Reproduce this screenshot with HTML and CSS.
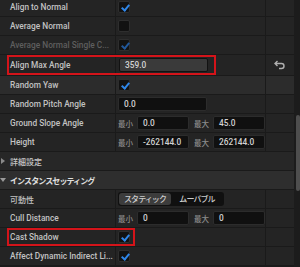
FILE: index.html
```html
<!DOCTYPE html>
<html lang="ja">
<head>
  <meta charset="UTF-8">
  <meta name="viewport" content="width=device-width, initial-scale=1.0">
  <title>Details</title>
  <link rel="stylesheet" href="styles.css">
</head>
<body>
  <div class="panel">
    <div class="rows">
      <div class="row">
        <div class="name">Align to Normal</div>
        <div class="value"><span class="check on"></span></div>
        <div class="reset"></div>
      </div>
      <div class="row">
        <div class="name">Average Normal</div>
        <div class="value"><span class="check"></span></div>
        <div class="reset"></div>
      </div>
      <div class="row">
        <div class="name dim">Average Normal Single C...</div>
        <div class="value"><span class="check on dim"></span></div>
        <div class="reset"></div>
      </div>
      <div class="row tall">
        <div class="name">Align Max Angle</div>
        <div class="value"><span class="field wide light">359.0</span></div>
        <div class="reset">
          <svg width="12" height="10" viewBox="0 0 12 10">
            <path d="M3.5 1 L1 3.5 L3.5 6 M1.5 3.5 H7.5 a2.5 2.5 0 0 1 0 5 H5" fill="none" stroke="#b0b0b0" stroke-width="1.4"/>
          </svg>
        </div>
        <div class="mark mark-angle"></div>
      </div>
      <div class="row hover">
        <div class="name">Random Yaw</div>
        <div class="value"><span class="check on"></span></div>
        <div class="reset"></div>
      </div>
      <div class="row">
        <div class="name">Random Pitch Angle</div>
        <div class="value"><span class="field wide">0.0</span></div>
        <div class="reset"></div>
      </div>
      <div class="row">
        <div class="name">Ground Slope Angle</div>
        <div class="value pair">
          <span class="tag">最小</span><span class="field">0.0</span>
          <span class="tag">最大</span><span class="field">45.0</span>
        </div>
        <div class="reset"></div>
      </div>
      <div class="row">
        <div class="name">Height</div>
        <div class="value pair">
          <span class="tag">最小</span><span class="field">-262144.0</span>
          <span class="tag">最大</span><span class="field">262144.0</span>
        </div>
        <div class="reset"></div>
      </div>
      <div class="category">
        <span class="arrow closed"></span><span class="jp">詳細設定</span>
      </div>
      <div class="category bold">
        <span class="arrow open"></span><span class="jp tight">インスタンスセッティング</span>
      </div>
      <div class="row">
        <div class="name jp">可動性</div>
        <div class="value">
          <div class="toggle">
            <span class="opt active">スタティック</span>
            <span class="opt">ムーバブル</span>
          </div>
        </div>
        <div class="reset"></div>
      </div>
      <div class="row">
        <div class="name">Cull Distance</div>
        <div class="value pair">
          <span class="tag">最小</span><span class="field">0</span>
          <span class="tag">最大</span><span class="field">0</span>
        </div>
        <div class="reset"></div>
      </div>
      <div class="row">
        <div class="name">Cast Shadow</div>
        <div class="value"><span class="check on"></span></div>
        <div class="reset"></div>
        <div class="mark mark-shadow"></div>
      </div>
      <div class="row">
        <div class="name">Affect Dynamic Indirect Li...</div>
        <div class="value"><span class="check on"></span></div>
        <div class="reset"></div>
      </div>
    </div>
    <div class="scrollbar"><div class="thumb"></div></div>
  </div>
</body>
</html>
```

FILE: styles.css
```css
/* Panel base */
body {
  margin: 0;
  background: #1a1a1a;
  font-family: Roboto, "Noto Sans CJK JP", sans-serif;
  font-size: 8.3px;
  font-weight: 500;
  color: #c2c2c2;
  overflow: hidden;
}

.panel {
  display: flex;
  width: 300px;
  height: 267px;
  overflow: hidden;
}

.rows {
  width: 294px;
  margin-top: -2px;
  display: flex;
  flex-direction: column;
}

.jp {
  font-family: "Noto Sans CJK JP", sans-serif;
  font-size: 8px;
}

.jp.tight {
  letter-spacing: -0.9px;
}

/* Property rows */
.row {
  position: relative;
  display: grid;
  grid-template-columns: 116px 150px 28px;
  height: 18px;
  flex: none;
  background: #242424;
  border-bottom: 1px solid #1a1a1a;
}

.row.tall {
  height: 20px;
}

.row.hover {
  background: #2c2c2c;
}

.name {
  padding-left: 10px;
  display: flex;
  align-items: center;
  white-space: nowrap;
  overflow: hidden;
  border-right: 1px solid #1a1a1a;
}

.name.dim {
  color: #5e5e5e;
}

.value {
  display: flex;
  align-items: center;
  padding-left: 2px;
  border-right: 1px solid #1a1a1a;
}

.reset {
  display: flex;
  align-items: center;
  justify-content: center;
}

/* Checkbox */
.check {
  position: relative;
  width: 10px;
  height: 10px;
  background: #121212;
  border: 1px solid #2e2e2e;
  border-radius: 2px;
}

.check.on::after {
  content: "";
  position: absolute;
  left: 3.5px;
  top: 0.5px;
  width: 3px;
  height: 6px;
  border: solid #2f86e8;
  border-width: 0 2px 2px 0;
  transform: rotate(40deg);
}

.check.dim.on::after {
  border-color: #22589a;
}

/* Number fields */
.field {
  flex: none;
  height: 12px;
  line-height: 12px;
  background: #101010;
  border: 1px solid #2c2c2c;
  border-radius: 2px;
  padding-left: 5px;
  color: #d2d2d2;
  width: 45px;
  white-space: nowrap;
}

.field.wide {
  width: 82px;
}

.field.light {
  background: #3a3a3a;
  border-color: #121212;
  margin-left: 1px;
}

.pair .tag {
  flex: none;
  font-family: "Noto Sans CJK JP", sans-serif;
  font-size: 7.5px;
  color: #8c8c8c;
  white-space: nowrap;
  margin-right: 4px;
}

.pair .tag + .field {
  margin-right: 5px;
}

/* Mobility toggle */
.toggle {
  display: flex;
  background: #101010;
  border-radius: 3px;
  padding: 1px;
  font-family: "Noto Sans CJK JP", sans-serif;
  font-size: 8px;
}

.opt {
  width: 52px;
  text-align: center;
  height: 12px;
  line-height: 12px;
  border-radius: 3px;
  color: #cccccc;
  letter-spacing: -0.9px;
  white-space: nowrap;
}

.opt.active {
  background: #3c3c3c;
}

/* Categories */
.category {
  height: 18px;
  flex: none;
  background: #272727;
  border-bottom: 1px solid #1a1a1a;
  color: #c8c8c8;
  display: flex;
  align-items: center;
}

.category.bold {
  background: #2e2e2e;
  font-weight: bold;
  color: #e0e0e0;
}

.arrow {
  width: 10px;
  display: flex;
  justify-content: center;
  margin-left: -2px;
  margin-right: 2px;
}

.arrow.closed::before {
  content: "";
  border-left: 4px solid #8a8a8a;
  border-top: 3px solid transparent;
  border-bottom: 3px solid transparent;
}

.arrow.open::before {
  content: "";
  border-top: 4px solid #9a9a9a;
  border-left: 3px solid transparent;
  border-right: 3px solid transparent;
}

/* Red highlight boxes */
.mark {
  position: absolute;
  border: 2px solid #d4141a;
  top: 0;
  bottom: 0;
  left: 7px;
}

.mark-angle {
  width: 205px;
}

.mark-shadow {
  width: 124px;
}

/* Scrollbar */
.scrollbar {
  width: 6px;
  background: #1c1c1c;
}

.thumb {
  margin: 115px 0 0 2px;
  width: 4px;
  height: 76px;
  background: #4e4e4e;
  border-radius: 2px;
}
```
